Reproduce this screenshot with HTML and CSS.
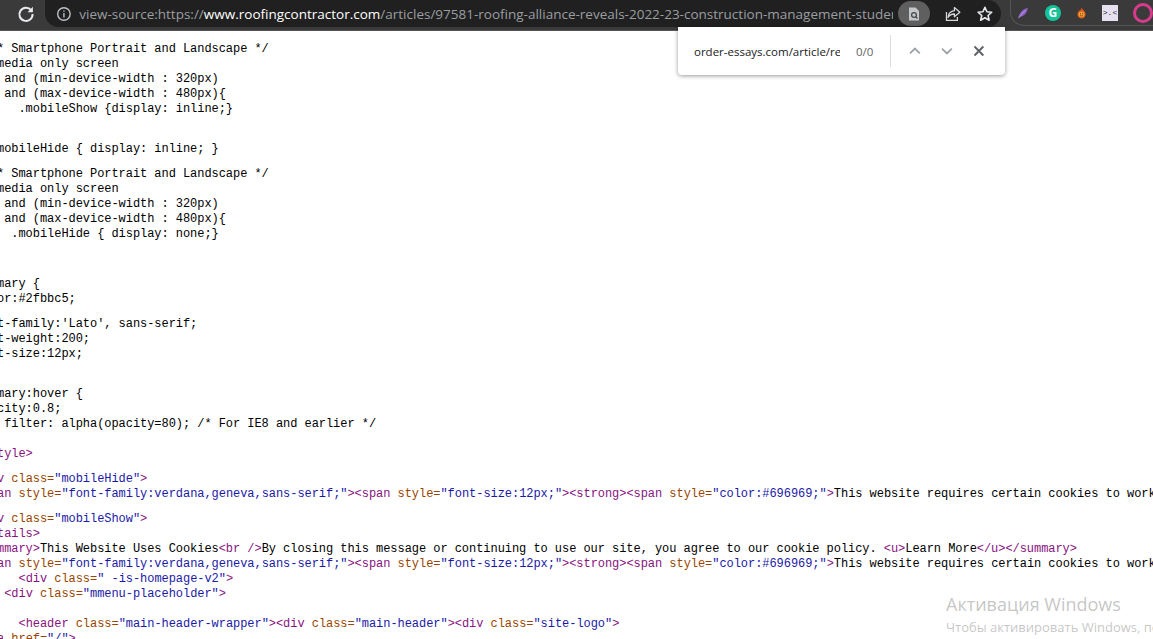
FILE: index.html
```html
<!DOCTYPE html>
<html lang="en">
<head>
  <meta charset="UTF-8">
  <title>view-source</title>
  <link rel="stylesheet" href="styles.css">
</head>
<body>
  <header class="toolbar">
    <button class="reload" aria-label="Reload">
      <svg width="18" height="18" viewBox="0 0 18 18"><path d="M14.2 5.2A6.6 6.6 0 1 0 15.6 9" fill="none" stroke="#e8eaed" stroke-width="2"/><path d="M15.9 1.8v5.4h-5.4z" fill="#e8eaed"/></svg>
    </button>
    <div class="omnibox">
      <svg class="info-icon" width="16" height="16" viewBox="0 0 16 16"><circle cx="8" cy="8" r="6.3" fill="none" stroke="#bdc1c6" stroke-width="1.4"/><path d="M7.3 7h1.4v4.5H7.3zM7.3 4.4h1.4v1.4H7.3z" fill="#bdc1c6"/></svg>
      <div class="url"><span class="url-dim">view-source:https://</span><span class="url-host">www.roofingcontractor.com</span><span class="url-dim">/articles/97581-roofing-alliance-reveals-2022-23-construction-management-studen...</span></div>
      <div class="find-pill">
        <svg width="16" height="16" viewBox="0 0 16 16"><path d="M3 1.5h6.5L13 5v9.5H3z" fill="#c4c7ca"/><circle cx="8" cy="9" r="2.4" fill="none" stroke="#4a4a4a" stroke-width="1.3"/><path d="M9.8 10.8l1.7 1.7" stroke="#4a4a4a" stroke-width="1.3"/></svg>
      </div>
      <svg class="omni-icon" width="18" height="18" viewBox="0 0 18 18"><path d="M2.5 7v8.5h11V12" fill="none" stroke="#d5d7da" stroke-width="1.3"/><path d="M10.5 2.5l5.5 4.7-5.5 4.6V9C7.5 9 5.5 10 4 12.500c.5-4 2.500-6.300 6.500-6.800z" fill="none" stroke="#d5d7da" stroke-width="1.3" stroke-linejoin="round"/></svg>
      <svg class="omni-icon" width="18" height="18" viewBox="0 0 18 18"><path d="M9 2.200l2 4.500 4.900.5-3.700 3.300 1.100 4.800L9 12.800l-4.300 2.500 1.100-4.800L2.100 7.200 7 6.700z" fill="none" stroke="#e8eaed" stroke-width="1.600" stroke-linejoin="round"/></svg>
    </div>
    <div class="extensions">
      <svg width="18" height="18" viewBox="0 0 18 18"><path d="M2 16.500C3 9 8 3.500 15.500 1.500 15 8 11 14 4.500 14.500z" fill="#8d62c4"/><path d="M2 16.500L12 5" stroke="#c9a8ee" stroke-width="1"/></svg>
      <span class="grammarly">G</span>
      <svg width="16" height="18" viewBox="0 0 16 18"><path d="M8 1c1 3 6 5 6 10a6 6 0 0 1-12 0c0-3 2-4 2.500-6C6 6 7.500 4 8 1z" fill="#d9541e"/><circle cx="8" cy="11" r="4.300" fill="#f2a12e"/><circle cx="6.500" cy="10" r=".8" fill="#5a2a08"/><circle cx="9.500" cy="10" r=".8" fill="#5a2a08"/><path d="M5.800 12.300c1 1.300 3.400 1.300 4.400 0" fill="none" stroke="#5a2a08"/></svg>
      <span class="ext-dev">&gt;.&lt;</span>
      <span class="ext-ring"></span>
    </div>
  </header>

  <main class="source">
    <div class="line">  /* Smartphone Portrait and Landscape */</div>
    <div class="line">  @media only screen</div>
    <div class="line">    and (min-device-width : 320px)</div>
    <div class="line">    and (max-device-width : 480px){</div>
    <div class="line">      .mobileShow {display: inline;}</div>
    <div class="line gap-25">  .mobileHide { display: inline; }</div>
    <div class="line gap-10">  /* Smartphone Portrait and Landscape */</div>
    <div class="line">  @media only screen</div>
    <div class="line">    and (min-device-width : 320px)</div>
    <div class="line">    and (max-device-width : 480px){</div>
    <div class="line">     .mobileHide { display: none;}</div>
    <div class="line gap-35">summary {</div>
    <div class="line">color:#2fbbc5;</div>
    <div class="line gap-10">font-family:'Lato', sans-serif;</div>
    <div class="line">font-weight:200;</div>
    <div class="line">font-size:12px;</div>
    <div class="line gap-25">summary:hover {</div>
    <div class="line">opacity:0.8;</div>
    <div class="line">    filter: alpha(opacity=80); /* For IE8 and earlier */</div>
    <div class="line gap-15"><span class="tag">&lt;/style&gt;</span></div>
    <div class="line gap-10"><span class="tag">&lt;div</span> <span class="attr">class=</span><span class="val">"mobileHide"</span><span class="tag">&gt;</span></div>
    <div class="line"><span class="tag">&lt;span</span> <span class="attr">style=</span><span class="val">"font-family:verdana,geneva,sans-serif;"</span><span class="tag">&gt;&lt;span</span> <span class="attr">style=</span><span class="val">"font-size:12px;"</span><span class="tag">&gt;&lt;strong&gt;&lt;span</span> <span class="attr">style=</span><span class="val">"color:#696969;"</span><span class="tag">&gt;</span>This website requires certain cookies to work and uses other cookies</div>
    <div class="line gap-10"><span class="tag">&lt;div</span> <span class="attr">class=</span><span class="val">"mobileShow"</span><span class="tag">&gt;</span></div>
    <div class="line"><span class="tag">&lt;details&gt;</span></div>
    <div class="line"><span class="tag">&lt;summary&gt;</span>This Website Uses Cookies<span class="tag">&lt;br /&gt;</span>By closing this message or continuing to use our site, you agree to our cookie policy. <span class="tag">&lt;u&gt;</span>Learn More<span class="tag">&lt;/u&gt;&lt;/summary&gt;</span></div>
    <div class="line"><span class="tag">&lt;span</span> <span class="attr">style=</span><span class="val">"font-family:verdana,geneva,sans-serif;"</span><span class="tag">&gt;&lt;span</span> <span class="attr">style=</span><span class="val">"font-size:12px;"</span><span class="tag">&gt;&lt;strong&gt;&lt;span</span> <span class="attr">style=</span><span class="val">"color:#696969;"</span><span class="tag">&gt;</span>This website requires certain cookies to work and uses other cookies</div>
    <div class="line">      <span class="tag">&lt;div</span> <span class="attr">class=</span><span class="val">" -is-homepage-v2"</span><span class="tag">&gt;</span></div>
    <div class="line">    <span class="tag">&lt;div</span> <span class="attr">class=</span><span class="val">"mmenu-placeholder"</span><span class="tag">&gt;</span></div>
    <div class="line gap-15">      <span class="tag">&lt;header</span> <span class="attr">class=</span><span class="val">"main-header-wrapper"</span><span class="tag">&gt;&lt;div</span> <span class="attr">class=</span><span class="val">"main-header"</span><span class="tag">&gt;&lt;div</span> <span class="attr">class=</span><span class="val">"site-logo"</span><span class="tag">&gt;</span></div>
    <div class="line">  <span class="tag">&lt;a</span> <span class="attr">href=</span><span class="val">"/"</span><span class="tag">&gt;</span></div>
  </main>

  <div class="find-bar">
    <div class="find-input">order-essays.com/article/report</div>
    <span class="find-count">0/0</span>
    <span class="find-divider"></span>
    <svg width="12" height="8" viewBox="0 0 12 8"><path d="M1 6.500l5-5 5 5" fill="none" stroke="#9aa0a6" stroke-width="1.700"/></svg>
    <svg width="12" height="8" viewBox="0 0 12 8"><path d="M1 1.500l5 5 5-5" fill="none" stroke="#9aa0a6" stroke-width="1.700"/></svg>
    <svg width="12" height="12" viewBox="0 0 12 12"><path d="M1.500 1.500l9 9M10.500 1.500l-9 9" fill="none" stroke="#5f6368" stroke-width="2"/></svg>
  </div>

  <div class="activation">
    <div class="activation-title">Активация Windows</div>
    <div class="activation-sub">Чтобы активировать Windows, перейдите</div>
  </div>
</body>
</html>
```

FILE: styles.css
```css
html, body {
  margin: 0;
  padding: 0;
  height: 100%;
  overflow: hidden;
  background-color: #fff;
}

.toolbar {
  display: flex;
  align-items: flex-start;
  height: 31px;
  box-sizing: border-box;
  background-color: #3a3a3a;
  border-bottom: 1px solid #555;
}

.reload {
  width: 47px;
  height: 27px;
  padding: 0 0 0 17px;
  border: none;
  background: none;
  display: flex;
  align-items: center;
}

.omnibox {
  width: 956px;
  height: 27px;
  box-sizing: border-box;
  background-color: #202020;
  border-radius: 0 14px 14px 14px;
  display: flex;
  align-items: center;
  padding: 0 8px 0 11px;
  font-family: "Open Sans", sans-serif;
  font-size: 13.5px;
}

.url {
  width: 822px;
  margin-left: 7px;
  white-space: nowrap;
  overflow: hidden;
}

.url-dim {
  color: #9b9ea1;
}

.url-host {
  color: #fff;
}

.find-pill {
  width: 32px;
  height: 25px;
  margin-left: 5px;
  border-radius: 13px;
  background-color: #5f5f5f;
  display: flex;
  align-items: center;
  justify-content: center;
}

.omni-icon {
  margin-left: 14px;
}

.extensions {
  width: 150px;
  height: 26px;
  margin-left: 9px;
  box-sizing: border-box;
  border: 1px solid #555;
  border-top: none;
  border-right: none;
  border-radius: 0 0 0 14px;
  display: flex;
  align-items: center;
  gap: 15px;
  padding-left: 6px;
  overflow: hidden;
}

.grammarly {
  width: 16px;
  height: 16px;
  flex: none;
  border-radius: 50%;
  background-color: #15c39a;
  color: #fff;
  font: bold 12px/16px "Open Sans", sans-serif;
  text-align: center;
}

.ext-dev {
  width: 16px;
  height: 16px;
  flex: none;
  background-color: #e6e0f0;
  color: #222;
  font: 8px/16px "Liberation Mono", monospace;
  text-align: center;
}

.ext-ring {
  width: 14px;
  height: 14px;
  flex: none;
  border-radius: 50%;
  border: 3px solid #d93a8c;
}

.source {
  margin-top: 11px;
  margin-left: -24.45px;
  font-family: "Liberation Mono", monospace;
  font-size: 12px;
  letter-spacing: -0.05px;
  line-height: 15px;
  color: #000;
}

.line {
  height: 15px;
  white-space: pre;
}

.gap-10 { margin-top: 10px; }
.gap-15 { margin-top: 15px; }
.gap-25 { margin-top: 25px; }
.gap-35 { margin-top: 35px; }

.tag { color: #881280; }
.attr { color: #994500; }
.val { color: #1a1aa6; }

.find-bar {
  position: absolute;
  left: 678px;
  top: 27px;
  width: 327px;
  height: 48px;
  box-sizing: border-box;
  display: flex;
  align-items: center;
  padding-left: 16px;
  background-color: #fff;
  border-radius: 0 0 4px 4px;
  box-shadow: 0 1px 4px rgba(0, 0, 0, 0.4);
  font-family: "Open Sans", sans-serif;
  font-size: 11.5px;
}

.find-input {
  width: 148px;
  overflow: hidden;
  white-space: nowrap;
  color: #202124;
}

.find-count {
  width: 34px;
  margin-left: 16px;
  color: #5f6368;
}

.find-divider {
  width: 1px;
  height: 32px;
  background-color: #dadce0;
  margin-right: 19px;
}

.find-bar svg {
  margin-right: 20px;
}

.activation {
  position: absolute;
  left: 946px;
  top: 592px;
  width: 207px;
  overflow: hidden;
  white-space: nowrap;
  font-family: "Open Sans", sans-serif;
  color: rgba(150, 150, 150, 0.55);
}

.activation-title {
  font-size: 18px;
  line-height: 25px;
}

.activation-sub {
  font-size: 13px;
  line-height: 20px;
}
```
